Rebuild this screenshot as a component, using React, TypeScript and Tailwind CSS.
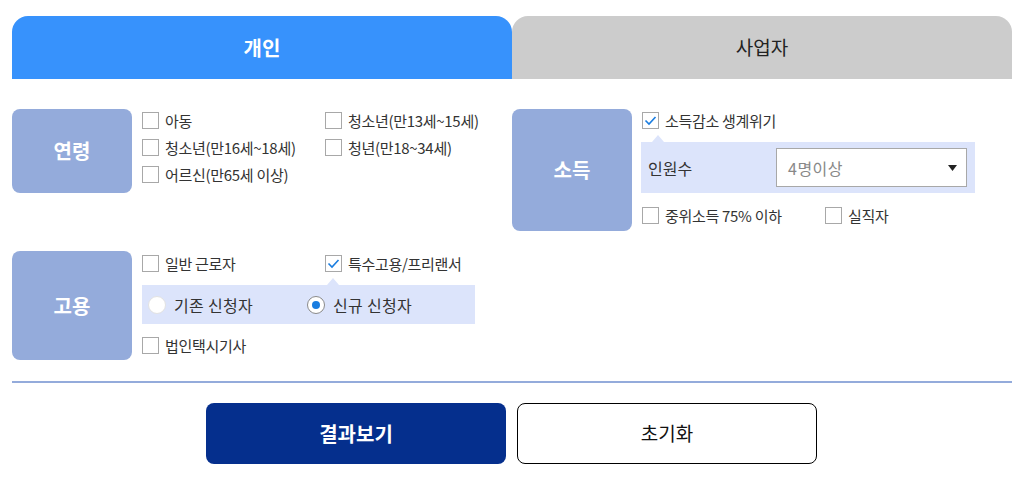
import { useState } from "react"

const font = { fontFamily: '"Noto Sans CJK KR", "Noto Sans", sans-serif' }

function Check({ label, checked = false }: { label: string; checked?: boolean }) {
  return (
    <label className="flex items-center h-[17px] text-[15px] leading-none text-[#333] whitespace-nowrap">
      <span className="flex items-center justify-center w-[17px] h-[17px] border border-[#a8a8a8] bg-white shrink-0">
        {checked && (
          <svg width="13" height="11" viewBox="0 0 13 11">
            <polyline points="1.5,5.5 5,9 11.5,2" fill="none" stroke="#1a7de0" strokeWidth="1.6" />
          </svg>
        )}
      </span>
      <span className="ml-[6px] tracking-[-0.3px]">{label}</span>
    </label>
  )
}

function Radio({ label, checked = false }: { label: string; checked?: boolean }) {
  return (
    <label className="flex items-center text-[16px] leading-none text-[#333] whitespace-nowrap">
      <span
        className={
          checked
            ? "flex items-center justify-center w-[18px] h-[18px] rounded-full border border-[#8a8a8a] bg-white"
            : "flex items-center justify-center w-[18px] h-[18px] rounded-full border border-[#e2e2e2] bg-white"
        }
      >
        {checked && <span className="w-[8px] h-[8px] rounded-full bg-[#1a7de0]" />}
      </span>
      <span className="ml-[8px] tracking-[0.3px]">{label}</span>
    </label>
  )
}

function Pointer({ offset }: { offset: string }) {
  return (
    <div className={`h-[7px] flex ${offset}`}>
      <div className="w-0 h-0 border-l-[6px] border-r-[6px] border-b-[7px] border-l-transparent border-r-transparent border-b-[#dce4fb]" />
    </div>
  )
}

function Tag({ children, h }: { children: string; h: string }) {
  return (
    <div className={`w-[120px] ${h} shrink-0 rounded-lg bg-[#94abdb] flex items-center justify-center text-white text-[20px] font-bold`}>
      {children}
    </div>
  )
}

export default function App() {
  const [tab, setTab] = useState(0)

  return (
    <div className="w-[1028px] h-[488px] bg-white pl-3 pr-4 pt-4" style={font}>
      <div className="flex h-[63px]">
        <button
          onClick={() => setTab(0)}
          className={
            tab === 0
              ? "flex-1 rounded-t-2xl bg-[#3792fc] text-white text-[20px] font-bold"
              : "flex-1 rounded-t-2xl bg-[#cccccc] text-[#222] text-[19px]"
          }
        >
          개인
        </button>
        <button
          onClick={() => setTab(1)}
          className={
            tab === 1
              ? "flex-1 rounded-t-2xl bg-[#3792fc] text-white text-[20px] font-bold"
              : "flex-1 rounded-t-2xl bg-[#cccccc] text-[#222] text-[19px]"
          }
        >
          사업자
        </button>
      </div>

      <div className="mt-[30px] grid grid-cols-2 items-start">
        <div className="flex items-start gap-[10px]">
          <Tag h="h-[84px]">연령</Tag>
          <div className="pt-[3px] grid grid-cols-[183px_auto] gap-y-[10px]">
            <Check label="아동" />
            <Check label="청소년(만13세~15세)" />
            <Check label="청소년(만16세~18세)" />
            <Check label="청년(만18~34세)" />
            <Check label="어르신(만65세 이상)" />
          </div>
        </div>

        <div className="flex gap-[10px]">
          <Tag h="h-[122px]">소득</Tag>
          <div className="pt-[3px] flex flex-col">
            <Check label="소득감소 생계위기" checked />
            <div className="mt-[6px]">
              <Pointer offset="pl-[10px]" />
            </div>
            <div className="-ml-px w-[334px] h-[51px] bg-[#dce4fb] flex items-center justify-between pl-[7px] pr-[8px] text-[16px] text-[#333]">
              <span>인원수</span>
              <div className="w-[191px] h-[39px] bg-white border border-[#a8a8a8] flex items-center justify-between pl-[11px] pr-[9px]">
                <span className="text-[#888] text-[16px] tracking-[0.5px]">4명이상</span>
                <svg width="9" height="6" viewBox="0 0 9 6">
                  <polygon points="0,0 9,0 4.5,6" fill="#222" />
                </svg>
              </div>
            </div>
            <div className="mt-[14px] grid grid-cols-[183px_auto]">
              <Check label="중위소득 75% 이하" />
              <Check label="실직자" />
            </div>
          </div>
        </div>
      </div>

      <div className="mt-5 flex gap-[10px]">
        <Tag h="h-[109px]">고용</Tag>
        <div className="pt-[4px] flex flex-col">
          <div className="grid grid-cols-[183px_auto]">
            <Check label="일반 근로자" />
            <Check label="특수고용/프리랜서" checked />
          </div>
          <div className="mt-[6px]">
            <Pointer offset="pl-[185px]" />
          </div>
          <div className="w-[333px] h-[39px] bg-[#dce4fb] flex items-center pl-[6px]">
            <div className="w-[159px]">
              <Radio label="기존 신청자" />
            </div>
            <Radio label="신규 신청자" checked />
          </div>
          <div className="mt-[13px]">
            <Check label="법인택시기사" />
          </div>
        </div>
      </div>

      <div className="mt-[21px] h-[2px] bg-[#94abdb]" />

      <div className="mt-5 flex justify-center gap-[11px] pr-px">
        <button className="w-[300px] h-[61px] rounded-lg bg-[#052f8d] text-white text-[20px] font-bold">
          결과보기
        </button>
        <button className="w-[300px] h-[61px] rounded-lg bg-white border border-black text-[#111] text-[19px]">
          초기화
        </button>
      </div>
    </div>
  )
}
